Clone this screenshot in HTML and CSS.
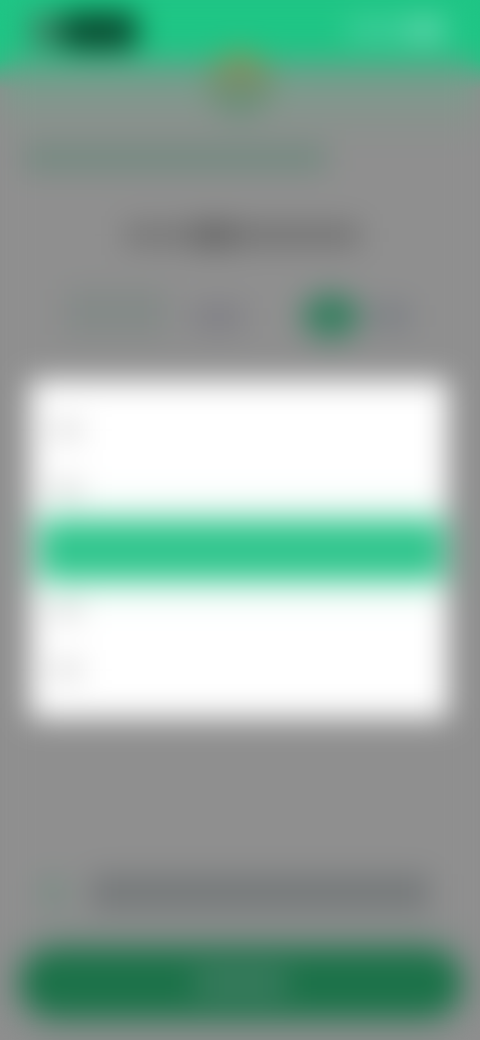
FILE: index.html
```html
<!DOCTYPE html>
<html lang="en">
<head>
<meta charset="utf-8">
<title>Picker dialog</title>
<link rel="stylesheet" href="styles.css">
</head>
<body>
<div class="page">
  <header class="topbar">
    <div class="status-left"><span class="signal"></span><span class="pill"></span></div>
    <div class="status-right"><span class="st a"></span><span class="st b"></span></div>
  </header>
  <main class="content">
    <div class="avatar"></div>
    <div class="line-wide"></div>
    <div class="title"><span class="t1"></span><span class="t2"></span><span class="t3"></span></div>
    <div class="tabs">
      <span class="tab-a"></span>
      <span class="tab-b"></span>
      <span class="tab-dot"></span>
      <span class="tab-c"></span>
    </div>
    <section class="sheet">
      <div class="option"><span class="opt-text"></span></div>
      <div class="option"><span class="opt-text"></span></div>
      <div class="option selected"></div>
      <div class="option"><span class="opt-text"></span></div>
      <div class="option"><span class="opt-text"></span></div>
    </section>
    <div class="agree"><span class="check"></span><span class="agree-text"></span></div>
    <div class="cta"><span class="cta-label"></span></div>
  </main>
</div>
</body>
</html>
```
FILE: styles.css
```css
html, body {
  margin: 0;
  padding: 0;
  width: 480px;
  height: 1040px;
  overflow: hidden;
  background: linear-gradient(#1fc585 0, #1fc585 60px, #8f8f8f 90px);
}
.page {
  width: 480px;
  height: 1040px;
  overflow: hidden;
  filter: blur(15px);
  display: flex;
  flex-direction: column;
}
.topbar {
  height: 60px;
  padding: 12px 15px 0 30px;
  box-sizing: border-box;
  background: #1fc585;
  display: flex;
  justify-content: space-between;
  align-items: flex-start;
  flex: none;
}
.status-left { display: flex; gap: 2px; height: 38px; }
.signal { width: 28px; height: 34px; margin-top: 2px; background: #427f65; border-radius: 6px; }
.pill { width: 78px; height: 38px; background: #0a4a30; border-radius: 10px; }
.status-right { display: flex; gap: 2px; padding-top: 6px; margin-right: 20px; }
.st { display: block; height: 24px; border-radius: 4px; }
.st.a { width: 58px; background: #3fcd99; }
.st.b { width: 38px; background: #62d6ad; }
.content {
  flex: 1;
  display: flex;
  flex-direction: column;
  background: linear-gradient(#5fa388 0, #7f9a8d 30px, #8a918d 60px, #8f8f8f 90px);
}
.avatar {
  width: 66px;
  height: 66px;
  margin: -8px auto 0;
  border-radius: 50%;
  background: linear-gradient(#968f58, #6b8f76 60%, #6e9080);
}
.line-wide {
  width: 304px;
  height: 26px;
  margin: 27px 0 0 23px;
  background: #738a80;
  border-radius: 3px;
}
.title {
  display: flex;
  align-items: center;
  margin: 53px 0 0 124px;
  height: 22px;
}
.t1 { width: 70px; height: 20px; background: #747474; }
.t2 { width: 40px; height: 26px; background: #666; }
.t3 { width: 126px; height: 22px; background: #727272; }
.tabs {
  display: flex;
  align-items: center;
  margin: 41px 0 0 64px;
  height: 50px;
}
.tab-a { width: 104px; height: 46px; background: #848a88; border-radius: 4px; }
.tab-b { width: 52px; height: 24px; margin-left: 24px; background: #7f7f85; border-radius: 3px; margin-top: 10px; }
.tab-dot { width: 58px; height: 44px; margin-left: 58px; background: #357f5f; border-radius: 50%; margin-top: 8px; }
.tab-c { width: 38px; height: 26px; margin-left: 12px; background: #7c8085; border-radius: 3px; margin-top: 8px; }
.sheet {
  width: 418px;
  height: 338px;
  margin: 43px 0 0 30px;
  background: #fff;
  padding: 20px 5px 0 10px;
  box-sizing: border-box;
  display: flex;
  flex-direction: column;
}
.option { height: 60px; display: flex; align-items: center; flex: none; }
.option.selected {
  height: 60px;
  margin: 0;
  background: #32c68e;
  border-radius: 6px;
  box-shadow: 0 0 26px 8px rgba(56, 200, 145, .28);
}
.opt-text { width: 32px; height: 20px; margin-left: 10px; background: #dedede; }
.agree {
  display: flex;
  align-items: center;
  margin: 158px 0 0 36px;
  height: 32px;
}
.check { width: 34px; height: 34px; background: #7b8c85; border-radius: 50%; }
.agree-text { width: 340px; height: 36px; margin-left: 20px; background: #767a7b; border-radius: 3px; }
.cta {
  width: 440px;
  height: 68px;
  margin: 41px 0 0 21px;
  background: #1c7249;
  border-radius: 34px;
  display: flex;
  justify-content: center;
  align-items: center;
  box-shadow: 0 0 24px 10px rgba(60, 125, 100, .4);
}
.cta-label { width: 92px; height: 26px; background: #3f7d62; }
```
